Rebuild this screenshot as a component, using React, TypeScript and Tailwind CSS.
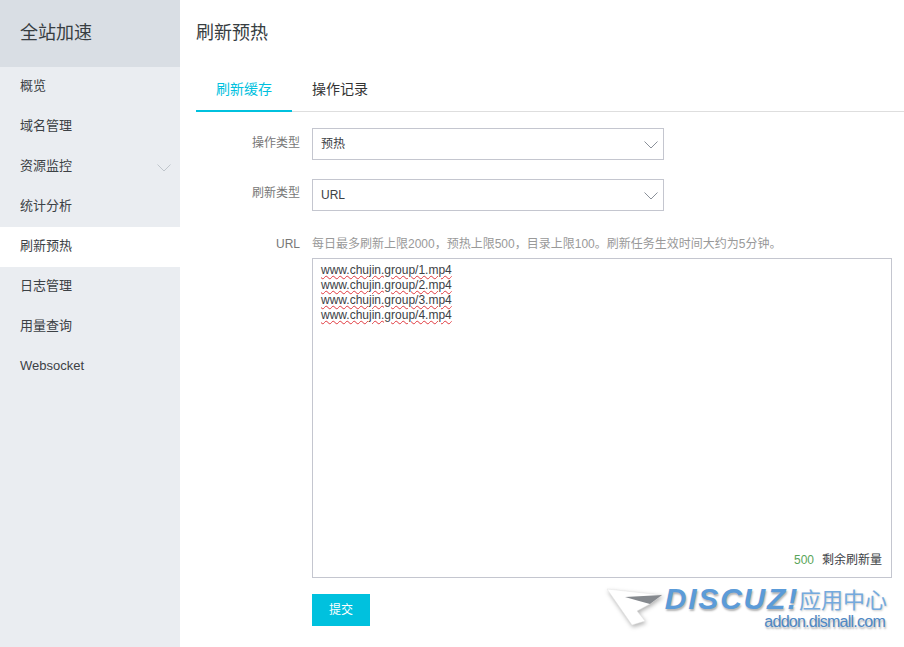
const cjk = "font-['Liberation_Sans','Noto_Sans_CJK_SC',sans-serif]";

const navItems = ["概览", "域名管理", "资源监控", "统计分析", "刷新预热", "日志管理", "用量查询", "Websocket"];
const urls = ["www.chujin.group/1.mp4", "www.chujin.group/2.mp4", "www.chujin.group/3.mp4", "www.chujin.group/4.mp4"];

// thin wide chevron, the icon-package ones are too narrow at this height
function Chevron({ className }: { className: string }) {
  return (
    <svg width="14" height="8" viewBox="0 0 14 8" fill="none" className={className}>
      <path d="M0.5 0.5 L7 7 L13.5 0.5" stroke="currentColor" strokeWidth="1" />
    </svg>
  );
}

function Sidebar() {
  return (
    <aside className="w-[180px] shrink-0 bg-[#eaedf1]">
      <div className="flex h-[67px] items-center bg-[#d9dee4] pl-5 pb-px text-[18px] text-[#373d41]">全站加速</div>
      <ul>
        {navItems.map((item) => (
          <li
            key={item}
            className={`flex h-10 items-center justify-between pl-5 pr-[9px] pb-[2px] text-[13px] leading-5 text-[#3c4145] ${
              item === "刷新预热" ? "bg-white" : ""
            }`}
          >
            {item}
            {item === "资源监控" && <Chevron className="mt-[3px] text-[#c0c6cc]" />}
          </li>
        ))}
      </ul>
    </aside>
  );
}

function FormSelect({ value }: { value: string }) {
  return (
    <div className="flex h-8 w-[352px] items-center justify-between border border-[#c4c6cf] pl-2 pr-[5px] text-xs text-[#3c4145]">
      {value}
      <Chevron className="mt-px text-[#8a9099]" />
    </div>
  );
}

function Watermark() {
  return (
    <div className="absolute left-[606px] top-[584px] flex h-[50px] w-[290px] text-[#5b9bd8]">
      <svg width="62" height="46" viewBox="0 0 62 46" className="shrink-0 drop-shadow-[1px_2px_2px_rgba(0,0,0,0.3)]">
        <path d="M1 5 L56 11 L44 20 L31 27 L39 37 L26 41 Z" fill="#fff" stroke="#e4e4e4" strokeWidth="0.5" />
        <path d="M19 13 L56 11 L44 20 L33 17 Z" fill="#85898e" />
      </svg>
      <div className="-ml-[3px] flex w-[222px] flex-col items-end">
        <div className="flex h-[28px] items-center whitespace-nowrap">
          <span className="font-['Liberation_Sans',sans-serif] text-[30px] font-bold italic tracking-[1.8px] [text-shadow:1px_2px_2px_rgba(0,0,0,0.3)]">
            DISCUZ!
          </span>
          <span className="font-['Noto_Sans_CJK_SC',sans-serif] text-[22px] text-[#74aade] [text-shadow:1px_1px_2px_rgba(0,0,0,0.2)]">
            应用中心
          </span>
        </div>
        <div className="mr-[2px] font-['Liberation_Sans',sans-serif] text-[16px] leading-[20px] tracking-[-0.75px] text-[#4f88c4] [text-shadow:1px_2px_2px_rgba(0,0,0,0.3)]">
          addon.dismall.com
        </div>
      </div>
    </div>
  );
}

export default function App() {
  return (
    <div className={`relative flex h-[647px] w-[904px] overflow-hidden bg-white ${cjk}`}>
      <Sidebar />
      <main className="min-w-0 flex-1 pl-4">
        <h1 className="pt-5 text-[18px] leading-[26px] font-normal text-[#373d41]">刷新预热</h1>
        <div className="mt-[25px] flex h-[41px] border-b border-[#dedede] text-[14px]">
          <div className="flex h-[41px] w-24 items-center justify-center border-b-2 border-[#00c1de] pb-[3px] text-[#00c1de]">刷新缓存</div>
          <div className="flex h-[41px] w-[96px] items-center justify-center pb-[5px] text-[#333]">操作记录</div>
        </div>

        <div className="mt-4 flex">
          <label className="w-[104px] pt-[7px] text-right text-xs text-[#777]">操作类型</label>
          <div className="ml-3"><FormSelect value="预热" /></div>
        </div>
        <div className="mt-[19px] flex">
          <label className="w-[104px] pt-[6px] text-right text-xs text-[#777]">刷新类型</label>
          <div className="ml-3"><FormSelect value="URL" /></div>
        </div>

        <div className="mt-[25px] flex">
          <label className="w-[104px] pt-px text-right text-xs leading-[15px] text-[#777]">URL</label>
          <div className="ml-3">
            <p className="pt-px text-xs leading-[15px] whitespace-nowrap text-[#999]">每日最多刷新上限2000，预热上限500，目录上限100。刷新任务生效时间大约为5分钟。</p>
            <div className="relative mt-[6px] h-[320px] w-[580px] border border-[#c4c6cf] px-2 py-[4px]">
              {urls.map((url) => (
                <div key={url} className="text-xs leading-[15px] text-[#3c4145] underline decoration-[#e0383e] decoration-wavy decoration-1 underline-offset-1">
                  {url}
                </div>
              ))}
              <div className="absolute right-[9px] bottom-[9px] text-xs text-[#3c4145]">
                <span className="mr-2 text-[#5aa55a]">500</span>剩余刷新量
              </div>
            </div>
            <button className="mt-4 h-8 w-[58px] bg-[#00c1de] text-xs text-white">提交</button>
          </div>
        </div>
      </main>
      <Watermark />
    </div>
  );
}
